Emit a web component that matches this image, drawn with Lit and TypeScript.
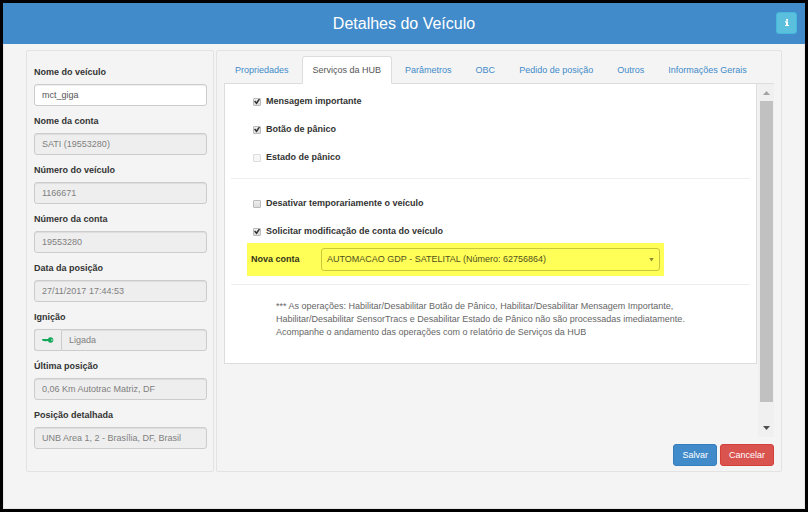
import { LitElement, html, css, svg, nothing } from "lit";
import { customElement, property, state } from "lit/decorators.js";
import { classMap } from "lit/directives/class-map.js";

interface Field {
  id: string;
  label: string;
  value: string;
  editable?: boolean;
  icon?: boolean;
}

const FIELDS: Field[] = [
  { id: "nome-veiculo", label: "Nome do veículo", value: "mct_giga", editable: true },
  { id: "nome-conta", label: "Nome da conta", value: "SATI (19553280)" },
  { id: "numero-veiculo", label: "Número do veículo", value: "1166671" },
  { id: "numero-conta", label: "Número da conta", value: "19553280" },
  { id: "data-posicao", label: "Data da posição", value: "27/11/2017 17:44:53" },
  { id: "ignicao", label: "Ignição", value: "Ligada", icon: true },
  { id: "ultima-posicao", label: "Última posição", value: "0,06 Km Autotrac Matriz, DF" },
  { id: "posicao-detalhada", label: "Posição detalhada", value: "UNB Area 1, 2 - Brasília, DF, Brasil" },
];

const TABS = [
  "Propriedades",
  "Serviços da HUB",
  "Parâmetros",
  "OBC",
  "Pedido de posição",
  "Outros",
  "Informações Gerais",
];

@customElement("vehicle-summary")
export class VehicleSummary extends LitElement {
  static styles = css`
    :host {
      display: block;
      padding: 15px 6px 13px 7px;
      border: 1px solid #e3e3e3;
      border-radius: 2px;
      box-sizing: border-box;
    }
    .field {
      display: flex;
      flex-direction: column;
      gap: 5px;
      margin-bottom: 9px;
    }
    label {
      font-weight: 700;
      line-height: 13px;
      color: #333;
    }
    .group {
      display: flex;
    }
    input {
      flex: 1;
      min-width: 0;
      height: 22px;
      box-sizing: border-box;
      padding: 0 7px;
      border: 1px solid #ccc;
      border-radius: 3px;
      background: #fff;
      box-shadow: inset 0 1px 1px rgba(0, 0, 0, 0.075);
      font: inherit;
      color: #555;
    }
    input[readonly] {
      background: #eee;
      color: #808080;
    }
    .addon {
      display: flex;
      align-items: center;
      justify-content: center;
      width: 27px;
      box-sizing: border-box;
      border: 1px solid #ccc;
      border-right: 0;
      border-radius: 3px 0 0 3px;
      background: #eee;
    }
    .addon + input {
      border-radius: 0 3px 3px 0;
    }
  `;

  private key() {
    return html`<span class="addon">
      <svg width="12" height="6" viewBox="0 0 12 6" aria-hidden="true">
        ${svg`<path fill="#13a85a" fill-rule="evenodd" d="M0 2.2 L1 2 H6 C6.4 .8 7.4 .2 8.6 .2 C10.2 .2 11.4 1.4 11.4 3 C11.4 4.6 10.2 5.8 8.6 5.8 C7.4 5.8 6.4 5 6 4 H4.6 L4.2 4.5 L3.6 4 L3 4.5 L2.4 4 H1 L0 3 Z M9.4 2.2 V3.8 H10.4 V2.2 Z"/>`}
      </svg>
    </span>`;
  }

  render() {
    return FIELDS.map(
      (f) => html`<div class="field">
        <label for=${f.id}>${f.label}</label>
        <div class="group">
          ${f.icon ? this.key() : nothing}
          <input id=${f.id} type="text" .value=${f.value} ?readonly=${!f.editable} />
        </div>
      </div>`,
    );
  }
}

@customElement("check-row")
export class CheckRow extends LitElement {
  @property() label = "";
  @property({ type: Boolean }) checked = false;
  @property({ type: Boolean }) disabled = false;

  static styles = css`
    :host {
      display: block;
    }
    label {
      display: flex;
      align-items: center;
      gap: 5px;
      line-height: 13px;
      font-weight: 700;
      color: #333;
    }
    input {
      appearance: none;
      display: grid;
      place-items: center;
      width: 8px;
      height: 8px;
      box-sizing: border-box;
      margin: 0;
      border: 1px solid #bbb;
      border-radius: 1px;
      background: linear-gradient(#eee, #ddd);
    }
    input:disabled {
      border-color: #ddd;
      background: #f6f6f6;
    }
    input:checked::before {
      content: "";
      width: 6px;
      height: 6px;
      background: #333;
      clip-path: polygon(0 50%, 20% 35%, 40% 60%, 82% 0, 100% 16%, 44% 100%);
    }
  `;

  render() {
    return html`<label>
      <input type="checkbox" .checked=${this.checked} ?disabled=${this.disabled} />
      <span>${this.label}</span>
    </label>`;
  }
}

@customElement("app-root")
export class AppRoot extends LitElement {
  @state() private active = 1;

  static styles = css`
    :host {
      display: flex;
      flex-direction: column;
      min-height: 100vh;
      box-sizing: border-box;
      border: 3px solid #000;
      background: #f4f4f4;
      font-family: "Liberation Sans", Arial, sans-serif;
      font-size: 9px;
      line-height: 13px;
      color: #333;
    }
    header {
      display: grid;
      grid-template-columns: 1fr auto 1fr;
      align-items: center;
      height: 41px;
      padding: 0 8px;
      background: #428bca;
    }
    h1 {
      grid-column: 2;
      margin: 0;
      font-size: 16px;
      font-weight: 400;
      line-height: 24px;
      color: #fff;
    }
    button {
      height: 22px;
      box-sizing: border-box;
      padding: 0 8px;
      border: 1px solid;
      border-radius: 3px;
      font: inherit;
      color: #fff;
    }
    .info {
      display: grid;
      place-items: center;
      justify-self: end;
      width: 21px;
      margin-bottom: 2px;
      padding: 0;
      border-color: #46b8da;
      background: #5bc0de;
    }
    main {
      display: grid;
      grid-template-columns: 188px 1fr;
      gap: 2px;
      padding: 6px 22px 36px;
      border: 1px solid #e6e6e6;
      border-top: 0;
      flex: 1;
    }
    .panel {
      display: flex;
      flex-direction: column;
      padding: 5px 7px;
      border: 1px solid #e3e3e3;
      border-radius: 2px;
    }
    nav {
      display: flex;
      gap: 2px;
      border-bottom: 1px solid #ddd;
    }
    .tab {
      padding: 7px 10px 6px;
      margin-bottom: -1px;
      border: 1px solid transparent;
      border-radius: 3px 3px 0 0;
      color: #428bca;
      text-decoration: none;
      white-space: nowrap;
    }
    .tab.active {
      border-color: #ddd #ddd #fff;
      background: #fff;
      color: #555;
    }
    .scroller {
      display: flex;
      align-items: stretch;
      flex: 1;
    }
    .sheet {
      flex: 1;
      align-self: flex-start;
      padding: 11px 6px 24px;
      border: 1px solid #ddd;
      border-top: 0;
      background: #fff;
    }
    .checks {
      display: grid;
      gap: 15px;
      padding: 0 22px;
    }
    hr {
      margin: 14px 0 18px;
      border: 0;
      border-top: 1px solid #eee;
    }
    .account {
      display: flex;
      align-items: center;
      margin: 5px 86px 8px 16px;
      padding: 5px 4px;
      background: #ffff57;
    }
    .account label {
      width: 70px;
      font-weight: 700;
      color: #33331a;
    }
    .picker {
      display: grid;
      flex: 1;
      align-items: center;
    }
    .picker::after {
      content: "";
      grid-area: 1 / 1;
      justify-self: end;
      width: 5px;
      height: 4px;
      margin-right: 6px;
      background: #888830;
      clip-path: polygon(0 0, 100% 0, 50% 100%);
      pointer-events: none;
    }
    select {
      appearance: none;
      grid-area: 1 / 1;
      height: 23px;
      box-sizing: border-box;
      padding: 0 5px;
      border: 1px solid #c8c83c;
      border-radius: 3px;
      background: transparent;
      font: inherit;
      color: #50501c;
    }
    .rule {
      margin: 8px 0 15px;
    }
    .note {
      margin: 0 45px;
      color: #666;
    }
    .bar {
      display: flex;
      flex-direction: column;
      align-items: center;
      width: 13px;
      padding: 0 1px 0 2px;
      margin-left: 1px;
      background: #f0f0f0;
    }
    .arrow {
      width: 7px;
      height: 4px;
      margin: 7px 0 6px;
      background: #a3a3a3;
      clip-path: polygon(50% 0, 100% 100%, 0 100%);
    }
    .thumb {
      align-self: stretch;
      flex: 1;
      margin-bottom: 17px;
      background: #c1c1c1;
    }
    .arrow.down {
      margin-bottom: 7px;
      background: #505050;
      clip-path: polygon(0 0, 100% 0, 50% 100%);
    }
    footer {
      display: flex;
      justify-content: flex-end;
      gap: 3px;
      padding-top: 7px;
    }
    .save {
      border-color: #357ebd;
      background: #428bca;
    }
    .cancel {
      border-color: #d43f3a;
      background: #d9534f;
    }
  `;

  private select(e: Event, i: number) {
    e.preventDefault();
    this.active = i;
  }

  render() {
    return html`
      <header>
        <h1>Detalhes do Veículo</h1>
        <button class="info" type="button" aria-label="Informações">
          <svg width="4" height="7" viewBox="0 0 4 7" aria-hidden="true">
            <path fill="#fff" d="M1 0H3V1.7H1ZM0 2.3H3V6H4V7H0V6H1V3.5H0Z" />
          </svg>
        </button>
      </header>
      <main>
        <vehicle-summary></vehicle-summary>
        <section class="panel">
          <nav>
            ${TABS.map(
              (t, i) => html`<a
                href="#"
                class=${classMap({ tab: true, active: i === this.active })}
                @click=${(e: Event) => this.select(e, i)}
                >${t}</a
              >`,
            )}
          </nav>
          <div class="scroller">
            <div class="sheet">
              <div class="checks">
                <check-row label="Mensagem importante" checked></check-row>
                <check-row label="Botão de pânico" checked></check-row>
                <check-row label="Estado de pânico" disabled></check-row>
              </div>
              <hr />
              <div class="checks">
                <check-row label="Desativar temporariamente o veículo"></check-row>
                <check-row label="Solicitar modificação de conta do veículo" checked></check-row>
              </div>
              <div class="account">
                <label for="conta">Nova conta</label>
                <div class="picker">
                  <select id="conta">
                    <option>AUTOMACAO GDP - SATELITAL (Número: 62756864)</option>
                  </select>
                </div>
              </div>
              <hr class="rule" />
              <p class="note">
                *** As operações: Habilitar/Desabilitar Botão de Pânico, Habilitar/Desabilitar Mensagem Importante,<br />
                Habilitar/Desabilitar SensorTracs e Desabilitar Estado de Pânico não são processadas imediatamente.<br />
                Acompanhe o andamento das operações com o relatório de Serviços da HUB
              </p>
            </div>
            <div class="bar" aria-hidden="true">
              <span class="arrow"></span>
              <span class="thumb"></span>
              <span class="arrow down"></span>
            </div>
          </div>
          <footer>
            <button class="save" type="button">Salvar</button>
            <button class="cancel" type="button">Cancelar</button>
          </footer>
        </section>
      </main>
    `;
  }
}
